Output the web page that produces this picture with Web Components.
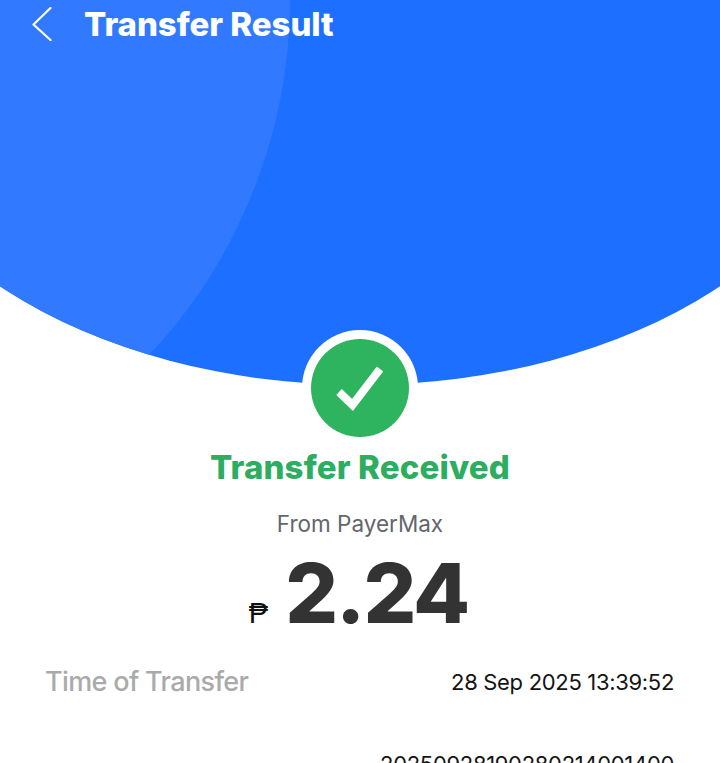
<!DOCTYPE html>
<html><head><meta charset="utf-8">
<style>
html,body{margin:0;padding:0;background:#fff;height:763px;overflow:hidden;font-family:Inter,"Liberation Sans",sans-serif}
</style></head><body>
<transfer-result></transfer-result>
<template id="t-hero"><style>
:host{display:block;position:relative;height:385px;color:#fff}
svg.bg{position:absolute;inset:0;width:720px;height:385px;display:block}
.bar{position:relative;display:flex;align-items:center;height:48px;padding-left:32px;gap:32px}
.bar svg{width:20px;height:34px;display:block}
.t{font:800 33px/48px Inter,sans-serif;letter-spacing:-.05px;white-space:nowrap}
</style>
<svg class="bg" viewBox="0 0 720 385"><defs><clipPath id="c"><ellipse cx="360" cy="62" rx="500" ry="323"/></clipPath></defs>
<g clip-path="url(#c)"><rect width="720" height="385" fill="#1c6fff"/><path d="M0 0H290C290 140 232 270 146 358L0 358Z" fill="#3179ff"/></g></svg>
<div class="bar"><svg viewBox="0 0 20 34"><path d="M18.5 1 1.500 17.500 18.500 33" fill="none" stroke="#fff" stroke-width="2.200" stroke-linecap="round" stroke-linejoin="round"/></svg><span class="t"><slot></slot></span></div>
</template>
<template id="t-badge"><style>
:host{display:block;position:absolute;left:302px;top:330px;width:116px;height:116px}
.o{box-sizing:border-box;width:116px;height:116px;border-radius:50%;background:#fff;padding:9px}
.i{width:98px;height:98px;border-radius:50%;background:#2eb45e;display:flex;align-items:center;justify-content:center}
svg{width:98px;height:98px;display:block}
</style><div class="o"><div class="i"><svg viewBox="0 0 98 98"><path d="M28 53 41.500 66 69 30" fill="none" stroke="#fff" stroke-width="8"/></svg></div></div>
</template>
<template id="t-row"><style>
:host{display:flex;justify-content:space-between;align-items:center;padding:0 46px;height:44px}
.l{font:500 27px/44px Inter,sans-serif;letter-spacing:-.64px;color:#aaa;white-space:nowrap;margin-left:-1px}
.v{font:400 22px/44px Inter,sans-serif;letter-spacing:-.32px;color:#141414;white-space:nowrap}
</style><span class="l"><slot name="label"></slot></span><span class="v"><slot name="value"></slot></span>
</template>
<template id="t-amount"><style>
:host{display:flex;justify-content:center;align-items:baseline;gap:17px;color:#333;height:84px;margin-top:12px;padding-right:3px}
.c{font:400 29px/84px "Liberation Sans",sans-serif;color:#111}
.a{font:800 83px/84px Inter,sans-serif;letter-spacing:-2px}
</style><span class="c"><slot name="cur"></slot></span><span class="a"><slot></slot></span>
</template>
<template id="t-app"><style>
:host{display:block;position:relative;height:763px;overflow:hidden;background:#fff}
.h{text-align:center;font:800 33px/42px Inter,sans-serif;letter-spacing:.15px;color:#2dad5f;margin-top:61px}
.f{text-align:center;font:400 22.500px/30px Inter,sans-serif;color:#63666a;margin-top:21px}
.rows{margin-top:25px;display:flex;flex-direction:column;gap:38px}
</style>
<tr-hero>Transfer Result</tr-hero><tr-badge></tr-badge>
<div class="h">Transfer Received</div><div class="f">From PayerMax</div>
<tr-amount><span slot="cur">₱</span>2.24</tr-amount>
<div class="rows"><tr-row><span slot="label">Time of Transfer</span><span slot="value">28 Sep 2025 13:39:52</span></tr-row>
<tr-row><span slot="label"></span><span slot="value">20250928190280214001400</span></tr-row></div>
</template>
<script>
const def=(n,id)=>customElements.define(n,class extends HTMLElement{constructor(){super();this.attachShadow({mode:'open'}).appendChild(document.getElementById(id).content.cloneNode(true))}});
def('tr-hero','t-hero');def('tr-badge','t-badge');def('tr-row','t-row');def('tr-amount','t-amount');def('transfer-result','t-app');
</script>
</body></html>
